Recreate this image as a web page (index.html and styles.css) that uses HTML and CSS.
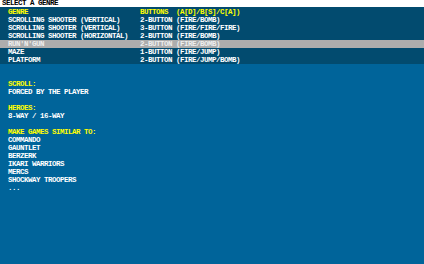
FILE: index.html
```html
<!DOCTYPE html>
<html lang="en">
<head>
  <meta charset="UTF-8">
  <title>Select a Genre</title>
  <link rel="stylesheet" href="styles.css">
</head>
<body>
  <div class="title">SELECT A GENRE</div>

  <!-- Genre list -->
  <div class="genre-table">
    <div class="row head">
      <span>GENRE</span>
      <span>BUTTONS</span>
      <span>(A[D]/B[S]/C[A])</span>
    </div>
    <div class="row">
      <span>SCROLLING SHOOTER (VERTICAL)</span>
      <span>2-BUTTON</span>
      <span>(FIRE/BOMB)</span>
    </div>
    <div class="row">
      <span>SCROLLING SHOOTER (VERTICAL)</span>
      <span>3-BUTTON</span>
      <span>(FIRE/FIRE/FIRE)</span>
    </div>
    <div class="row">
      <span>SCROLLING SHOOTER (HORIZONTAL)</span>
      <span>2-BUTTON</span>
      <span>(FIRE/BOMB)</span>
    </div>
    <div class="row selected">
      <span>RUN'N'GUN</span>
      <span>2-BUTTON</span>
      <span>(FIRE/BOMB)</span>
    </div>
    <div class="row">
      <span>MAZE</span>
      <span>1-BUTTON</span>
      <span>(FIRE/JUMP)</span>
    </div>
    <div class="row">
      <span>PLATFORM</span>
      <span>2-BUTTON</span>
      <span>(FIRE/JUMP/BOMB)</span>
    </div>
  </div>

  <!-- Genre details -->
  <div class="details">
    <div class="section">
      <div class="label">SCROLL:</div>
      <div>FORCED BY THE PLAYER</div>
    </div>
    <div class="section">
      <div class="label">HEROES:</div>
      <div>8-WAY / 16-WAY</div>
    </div>
    <div class="section">
      <div class="label">MAKE GAMES SIMILAR TO:</div>
      <div>COMMANDO</div>
      <div>GAUNTLET</div>
      <div>BERZERK</div>
      <div>IKARI WARRIORS</div>
      <div>MERCS</div>
      <div>SHOCKWAY TROOPERS</div>
      <div>...</div>
    </div>
  </div>
</body>
</html>
```

FILE: styles.css
```css
body {
  margin: 0;
  background-color: #00649a;
  color: #ffffff;
  font-family: 'Liberation Mono', monospace;
  font-size: 7.5px;
  letter-spacing: -0.5px;
  font-weight: bold;
  line-height: 8px;
}

.title {
  background-color: #ffffff;
  color: #000000;
  height: 7px;
  padding-left: 2px;
  line-height: 7px;
}

.genre-table {
  background-color: #024b6f;
  padding-top: 1px;
}

.row {
  display: grid;
  grid-template-columns: 132px 36px 1fr;
  height: 8px;
  padding-left: 8px;
  white-space: nowrap;
}

.row.head {
  color: #ffff00;
}

.row.selected {
  background-color: #adadad;
  color: #eeeeee;
}

.details {
  padding: 16px 8px 0;
}

.section {
  margin-bottom: 8px;
}

.label {
  color: #ffff00;
}
```
